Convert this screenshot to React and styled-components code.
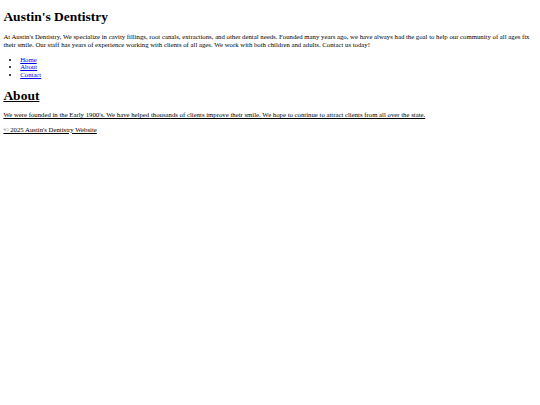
import React from "react";
import styled, { createGlobalStyle } from "styled-components";

const Global = createGlobalStyle`
  html, body { background: #fff; }
  body {
    margin: 3.375px;
    font-family: "Liberation Serif", "Times New Roman", serif;
    font-size: 6.75px;
    line-height: 1.1;
    color: #000;
  }
`;

const Header = styled.header``;

const Title = styled.h1`
  font-size: 13.5px;
  line-height: normal;
  font-weight: bold;
  margin: 6px 0 8px;
`;

const Text = styled.p`
  margin: 6.75px 0;
`;

const NavList = styled.ul`
  margin: 7.5px 0;
  padding-left: 16.875px;
  list-style: disc;
`;

const NavLink = styled.a`
  color: #0000ee;
  text-decoration: underline;
`;

const Section = styled.section`
  text-decoration: underline;
`;

const SectionTitle = styled.h2`
  font-size: 13.5px;
  line-height: normal;
  font-weight: bold;
  margin: 10px 0 7px;
`;

const Footer = styled.footer`
  text-decoration: underline;
  margin-top: 7.5px;
`;

export default function App() {
  return (
    <>
      <Global />
      <Header>
        <Title>Austin's Dentistry</Title>
        <Text>
          At Austin's Dentistry, We specialize in cavity fillings, root canals, extractions, and other dental needs. Founded many years ago, we have always had the goal to help our community of all ages fix their smile. Our staff has years of experience working with clients of all ages. We work with both children and adults. Contact us today!
        </Text>
        <nav>
          <NavList>
            <li><NavLink href="#">Home</NavLink></li>
            <li><NavLink href="#">About</NavLink></li>
            <li><NavLink href="#">Contact</NavLink></li>
          </NavList>
        </nav>
      </Header>
      <Section>
        <SectionTitle>About</SectionTitle>
        <Text>
          We were founded in the Early 1900's. We have helped thousands of clients improve their smile. We hope to continue to attract clients from all over the state.
        </Text>
      </Section>
      <Footer>
        <Text>© 2025 Austin's Dentistry Website</Text>
      </Footer>
    </>
  );
}
